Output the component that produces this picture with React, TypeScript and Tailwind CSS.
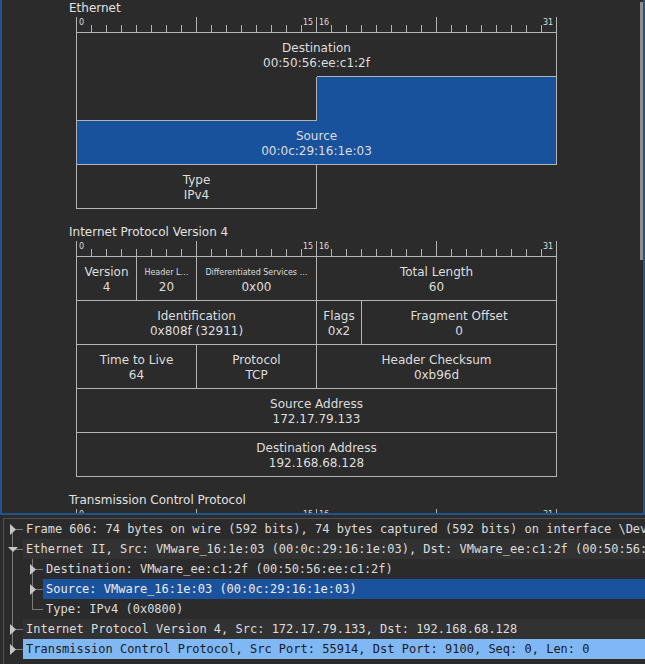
import clsx from 'clsx'
import type { ReactNode } from 'react'

const LINE = '#b4b4b4'

function Ruler() {
  const ticks = Array.from({ length: 33 }, (_, i) => i)
  return (
    <div className="relative h-4 w-[481px]">
      <svg width="481" height="16" className="block" shapeRendering="crispEdges">
        <line x1="0" y1="15.5" x2="481" y2="15.5" stroke={LINE} />
        {ticks.map((i) => {
          const x = i * 15 + 0.5
          return (
            <line key={i} x1={x} x2={x} y1={i % 8 === 0 ? 0 : 8} y2={16} stroke={LINE} />
          )
        })}
      </svg>
      <span className="absolute left-[3px] top-[2px] text-[8px] leading-[8px]">0</span>
      <span className="absolute left-[227px] top-[2px] text-[8px] leading-[8px]">15</span>
      <span className="absolute left-[243px] top-[2px] text-[8px] leading-[8px]">16</span>
      <span className="absolute left-[467px] top-[2px] text-[8px] leading-[8px]">31</span>
    </div>
  )
}

function Cell({
  className,
  name,
  value,
  small,
  open,
}: {
  className: string
  name?: string
  value?: string
  small?: boolean
  open?: boolean
}) {
  return (
    <div
      className={clsx(
        'flex flex-col items-center justify-center overflow-hidden whitespace-nowrap border-[#b4b4b4]',
        open ? 'pt-px' : 'pt-[2px]',
        className
      )}
    >
      {name && (
        <span className={small ? 'text-[8px] leading-[15px]' : 'text-[12px] leading-[15px]'}>
          {name}
        </span>
      )}
      {value && <span className="text-[12px] leading-[15px]">{value}</span>}
    </div>
  )
}

function Section({
  title,
  className,
  children,
}: {
  title: string
  className?: string
  children?: ReactNode
}) {
  return (
    <div className={className}>
      <div className="text-[12px] leading-[14px] text-[#e2e2e2]">{title}</div>
      <div className="ml-[7px] mt-[2px]">
        <Ruler />
        {children}
      </div>
    </div>
  )
}

const span: Record<number, string> = {
  3: 'col-span-3',
  4: 'col-span-4',
  8: 'col-span-8',
  13: 'col-span-13',
  16: 'col-span-16',
  32: 'col-span-32',
}

const ipFields: { bits: number; name: string; value: string; small?: boolean }[] = [
  { bits: 4, name: 'Version', value: '4' },
  { bits: 4, name: 'Header L…', value: '20', small: true },
  { bits: 8, name: 'Differentiated Services …', value: '0x00', small: true },
  { bits: 16, name: 'Total Length', value: '60' },
  { bits: 16, name: 'Identification', value: '0x808f (32911)' },
  { bits: 3, name: 'Flags', value: '0x2' },
  { bits: 13, name: 'Fragment Offset', value: '0' },
  { bits: 8, name: 'Time to Live', value: '64' },
  { bits: 8, name: 'Protocol', value: 'TCP' },
  { bits: 16, name: 'Header Checksum', value: '0xb96d' },
  { bits: 32, name: 'Source Address', value: '172.17.79.133' },
  { bits: 32, name: 'Destination Address', value: '192.168.68.128' },
]

function TreeRow({
  depth,
  arrow,
  first,
  last,
  lastChild,
  tone,
  children,
}: {
  depth: 0 | 1
  arrow?: 'right' | 'down'
  first?: boolean
  last?: boolean
  lastChild?: boolean
  tone?: 'alt' | 'selected' | 'hover'
  children: ReactNode
}) {
  const ax = depth === 0 ? 6 : 26
  const vx = depth === 0 ? 8.5 : 28.5
  const w = depth === 0 ? 19 : 39
  return (
    <div className="flex h-5 items-center">
      <svg width={w} height="20" className="block shrink-0">
        <g shapeRendering="crispEdges" stroke="#7a7a7a">
          {depth === 1 && <line x1="8.5" x2="8.5" y1="0" y2="20" />}
          <line
            x1={vx}
            x2={vx}
            y1={depth === 0 && first ? 10 : 0}
            y2={(depth === 0 && last) || lastChild ? 10.5 : 20}
          />
          <line x1={vx} x2={w} y1="10.5" y2="10.5" />
        </g>
        {arrow === 'right' && (
          <polygon points={`${ax},5 ${ax + 6},10.5 ${ax},16`} fill="#c6c6c6" />
        )}
        {arrow === 'down' && <polygon points="4,8 14,8 9,13" fill="#c6c6c6" />}
      </svg>
      <div
        className={clsx(
          'h-5 flex-1 overflow-hidden whitespace-nowrap pl-[3px] leading-5',
          tone === 'alt' && 'bg-[#323232] text-[#dcdcdc]',
          tone === 'selected' && 'bg-[#1b529e] text-[#ececec]',
          tone === 'hover' && 'bg-[#80b8f5] text-[#1a1a1a]',
          !tone && 'text-[#dcdcdc]'
        )}
      >
        {children}
      </div>
    </div>
  )
}

export default function App() {
  return (
    <div className="h-[664px] w-[645px] overflow-hidden bg-[#2b2b2b]">
      <div className="relative h-[515px] overflow-hidden border-x-2 border-b-2 border-[#21538f]">
        <div className="pl-[67px] pt-px font-['DejaVu_Sans',sans-serif] text-[#dedede]">
          <Section title="Ethernet">
            <div className="grid w-[481px] grid-cols-[repeat(32,15px)] auto-rows-[44px] border-l border-[#b4b4b4]">
              <Cell open className="col-span-32 border-r" name="Destination" value="00:50:56:ee:c1:2f" />
              <Cell className="col-span-16 border-r border-b" />
              <Cell className="col-span-16 -mt-px border-t border-r bg-[#18529d]" />
              <Cell
                className="col-span-32 border-r border-b bg-[#18529d]"
                name="Source"
                value="00:0c:29:16:1e:03"
              />
              <Cell className="col-span-16 border-r border-b" name="Type" value="IPv4" />
            </div>
          </Section>

          <Section title="Internet Protocol Version 4" className="mt-4">
            <div className="grid w-[481px] grid-cols-[repeat(32,15px)] auto-rows-[44px] border-l border-[#b4b4b4]">
              {ipFields.map((f) => (
                <Cell
                  key={f.name}
                  className={clsx(span[f.bits], 'border-r border-b')}
                  name={f.name}
                  value={f.value}
                  small={f.small}
                />
              ))}
            </div>
          </Section>

          <Section title="Transmission Control Protocol" className="mt-4" />
        </div>
        <div className="absolute right-0 top-[2px] h-[258px] w-[3px] bg-[#8e8e8e]" />
      </div>

      <div className="ml-[3px] mt-[3px] h-[146px] overflow-hidden border-l border-t border-[#505050] font-['DejaVu_Sans_Mono',monospace] text-[12px]">
        <TreeRow depth={0} arrow="right" first>
          {'Frame 606: 74 bytes on wire (592 bits), 74 bytes captured (592 bits) on interface \\Device'}
        </TreeRow>
        <TreeRow depth={0} arrow="down" tone="alt">
          Ethernet II, Src: VMware_16:1e:03 (00:0c:29:16:1e:03), Dst: VMware_ee:c1:2f (00:50:56:ee:c1:2f)
        </TreeRow>
        <TreeRow depth={1} arrow="right">
          Destination: VMware_ee:c1:2f (00:50:56:ee:c1:2f)
        </TreeRow>
        <TreeRow depth={1} arrow="right" tone="selected">
          Source: VMware_16:1e:03 (00:0c:29:16:1e:03)
        </TreeRow>
        <TreeRow depth={1} lastChild>
          Type: IPv4 (0x0800)
        </TreeRow>
        <TreeRow depth={0} arrow="right" tone="alt">
          Internet Protocol Version 4, Src: 172.17.79.133, Dst: 192.168.68.128
        </TreeRow>
        <TreeRow depth={0} arrow="right" last tone="hover">
          Transmission Control Protocol, Src Port: 55914, Dst Port: 9100, Seq: 0, Len: 0
        </TreeRow>
      </div>
    </div>
  )
}
